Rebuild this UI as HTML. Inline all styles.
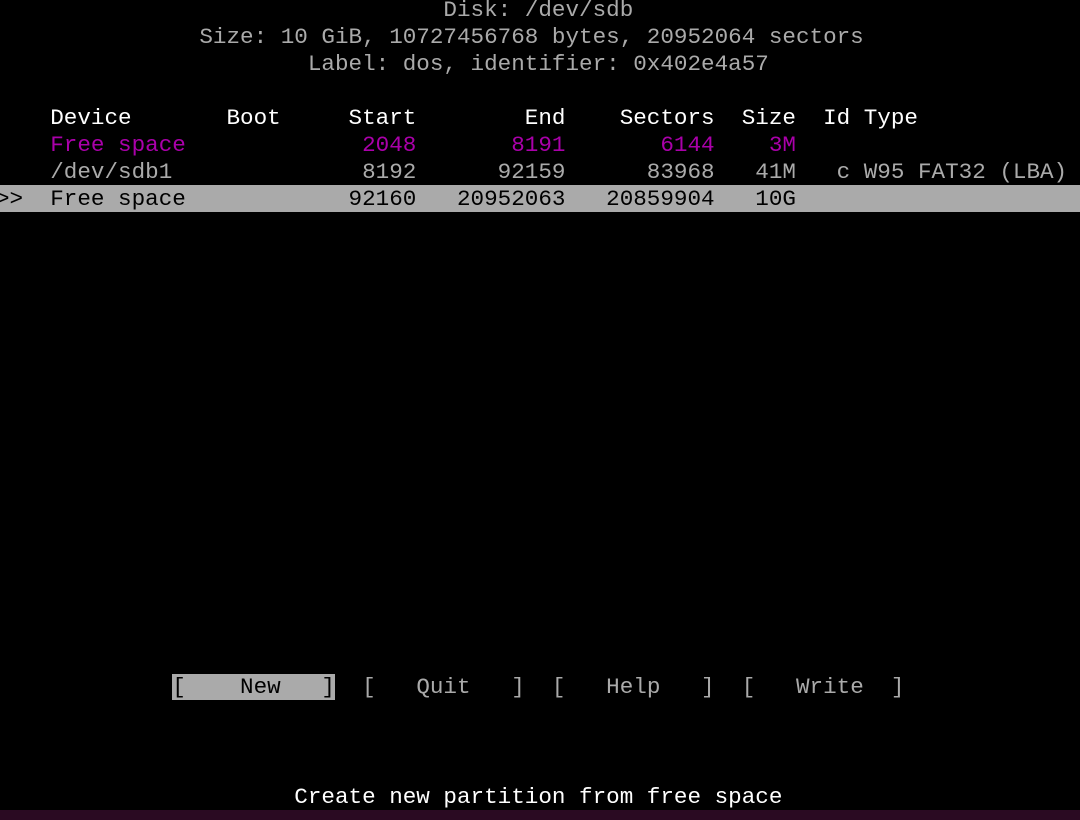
<!DOCTYPE html>
<html><head><meta charset="utf-8">
<style>
html,body{margin:0;padding:0;background:#000;width:1080px;height:820px;overflow:hidden;position:relative}
.r{position:absolute;left:-4px;height:27px;line-height:27px;font-family:"Liberation Mono",monospace;font-size:22.6px;white-space:pre;color:#aaa;margin:0}
.w{color:#fff}
.m{color:#aa00aa}
.hl{position:absolute;left:0;width:1080px;height:27px;background:#aaa}
.bh{background:#aaa;color:#000}
</style></head><body>
<div class="r" style="top:-3px">                                 Disk: /dev/sdb</div>
<div class="r" style="top:24px">               Size: 10 GiB, 10727456768 bytes, 20952064 sectors</div>
<div class="r" style="top:51px">                       Label: dos, identifier: 0x402e4a57</div>
<div class="r w" style="top:105px">    Device       Boot     Start        End    Sectors  Size  Id Type</div>
<div class="r m" style="top:132px">    Free space             2048       8191       6144    3M</div>
<div class="r" style="top:159px">    /dev/sdb1              8192      92159      83968   41M   c W95 FAT32 (LBA)</div>
<div class="hl" style="top:185px"></div>
<div class="r" style="top:186px;color:#000">&gt;&gt;  Free space            92160   20952063   20859904   10G</div>
<div class="r" style="top:674px">             <span class="bh">[    New   ]</span>  [   Quit   ]  [   Help   ]  [   Write  ]</div>
<div class="r w" style="top:784px">                      Create new partition from free space</div>
<div style="position:absolute;left:0;top:810px;width:1080px;height:10px;background:#2a0a22"></div>
</body></html>
